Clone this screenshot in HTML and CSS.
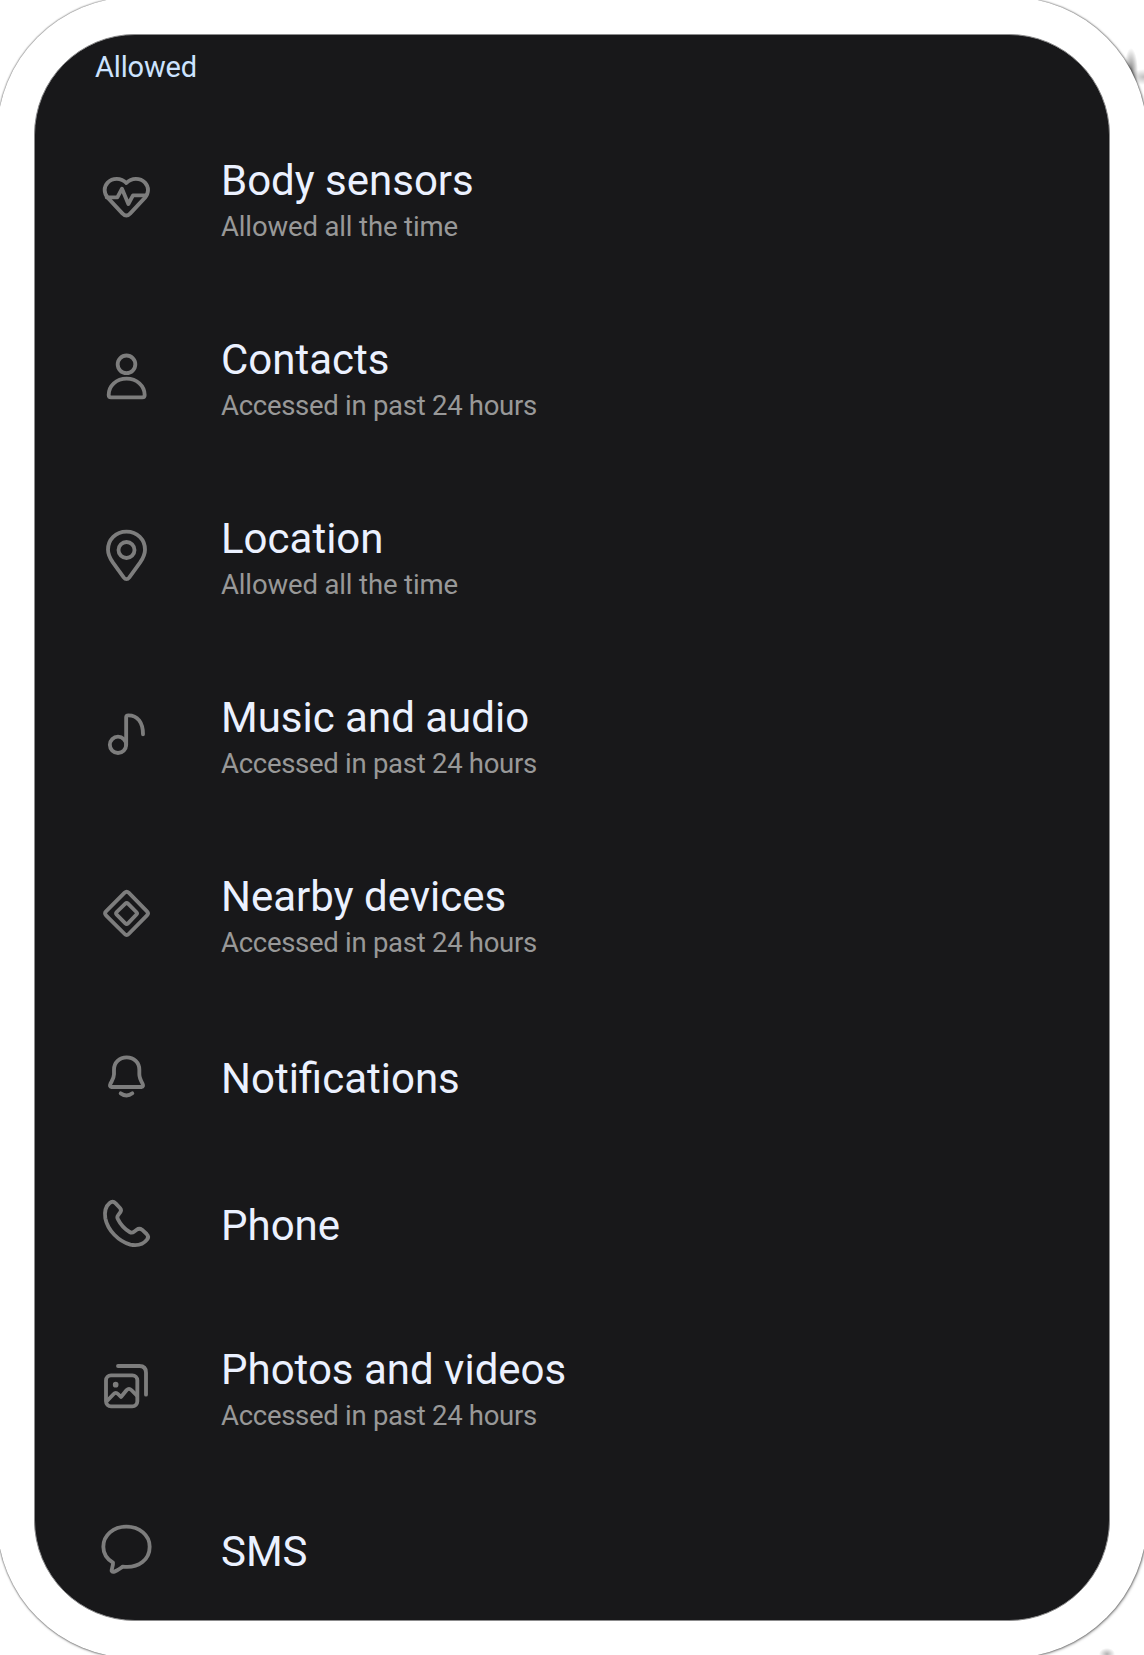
FILE: index.html
```
<!DOCTYPE html>
<html lang="en">
<head>
<meta charset="utf-8">
<title>App permissions</title>
<link rel="stylesheet" href="styles.css">
</head>
<body>
<div class="frame">
<main class="panel">
  <h2 class="section">Allowed</h2>
  <ul class="list">
    <li class="row"><svg class="icon" viewBox="0 9 270 270"><path d="M109 99C93 82 67 83 53 98C41 111 41 129 53 143L97 190Q109 203 121 190L165 143C177 129 177 111 165 98C151 83 125 82 109 99Z"/><path d="M50 142H82L96 116L115 162L129 136H168"/></svg>
      <div class="text"><div class="title">Body sensors</div><div class="sub short">Allowed all the time</div></div></li>
    <li class="row"><svg class="icon" viewBox="0 6 270 270"><circle cx="109.500" cy="103" r="26.500"/><path d="M63 202H157Q164 202 164 195C164 167 140 146 110 146C79 146 56 167 56 195Q56 202 63 202Z"/></svg>
      <div class="text"><div class="title">Contacts</div><div class="sub">Accessed in past 24 hours</div></div></li>
    <li class="row"><svg class="icon" viewBox="0 3 270 270"><path d="M109.500 65C77 65 54 89 54 119C54 136 60 145 69 158L101 202Q109.500 213 118 202L150 158C159 145 165 136 165 119C165 89 142 65 109.500 65Z"/><circle cx="109.500" cy="120" r="24"/></svg>
      <div class="text"><div class="title">Location</div><div class="sub short">Allowed all the time</div></div></li>
    <li class="row"><svg class="icon" viewBox="0 0 270 270"><circle cx="84" cy="164.500" r="24.500"/><path d="M108.500 165V82Q108.500 76 115 76C143 76 159 98 159 133"/></svg>
      <div class="text"><div class="title">Music and audio</div><div class="sub">Accessed in past 24 hours</div></div></li>
    <li class="row"><svg class="icon" viewBox="0 -3 270 270"><path d="M104 68Q110 62 116 68L171 124Q177 130 171 136L116 192Q110 198 104 192L48 136Q42 130 48 124Z"/><path d="M106 101Q110 97 114 101L139 126Q143 130 139 134L114 160Q110 164 106 160L80 134Q76 130 80 126Z"/></svg>
      <div class="text"><div class="title">Nearby devices</div><div class="sub">Accessed in past 24 hours</div></div></li>
    <li class="row single"><svg class="icon" viewBox="0 -9 270 270"><path d="M65 156H154Q162 155 158 147C151 134 148 129 148 118V104C148 83 132 67 110 67C88 67 72 83 72 104V118C72 129 68 134 61 147Q57 155 65 156Z"/><path d="M92 175Q110 188 127 175"/></svg>
      <div class="text"><div class="title">Notifications</div></div></li>
    <li class="row single"><svg class="icon" viewBox="0 -3 270 270"><path d="M59 69Q68 61 77 70L90 84Q96 91 90 98L84 106Q80 111 84 118C92 134 104 147 119 156Q126 160 132 155L140 149Q148 143 156 149L170 162Q178 170 171 179C160 193 142 198 121 194C86 184 53 151 46 115C43 96 47 79 59 69Z"/></svg>
      <div class="text"><div class="title">Phone</div></div></li>
    <li class="row"><svg class="icon" viewBox="0 -9 270 270"><rect x="48" y="91" width="94" height="93" rx="15"/><path d="M84 63H148Q168 63 168 83V149"/><path d="M51 168L71 147Q77 140 84 147L93 156L110 135Q117 128 124 135L141 152"/><circle class="dot" cx="77" cy="119" r="8.500"/></svg>
      <div class="text"><div class="title">Photos and videos</div><div class="sub">Accessed in past 24 hours</div></div></li>
    <li class="row single"><svg class="icon" viewBox="270 150 270 270"><path d="M379 215C340 215 310 241 310 275C310 295 321 312 339 323C340 333 334 342 335 348Q337 352 345 349C355 345 362 339 368 335C418 341 449 312 449 275C449 241 419 215 379 215Z"/></svg>
      <div class="text"><div class="title">SMS</div></div></li>
  </ul>
</main>
</div>
</body>
</html>
```
FILE: styles.css
```
* { box-sizing: border-box; }
html { background: #fff; overflow: hidden; }
body {
  margin: 0;
  width: 1144px;
  height: 1655px;
  overflow: hidden;
  font-family: Roboto, "Liberation Sans", sans-serif;
  background:
    radial-gradient(ellipse 7px 24px at 1131px 72px, rgba(0, 0, 0, .5), transparent),
    radial-gradient(ellipse 14px 8px at 1144px 77px, rgba(0, 0, 0, .25), transparent),
    radial-gradient(ellipse 8px 6px at 1107px 1654px, rgba(0, 0, 0, .3), transparent);
}
.frame {
  margin: -3px;
  width: 1150px;
  height: 1661px;
  padding: 37px;
  border-radius: 138px;
  box-shadow: 0 0 2px rgba(0, 0, 0, .75), 1px 1px 3px rgba(0, 0, 0, .35);
  background: #fff;
}
.panel {
  height: 1587px;
  border: 1px solid #8b8b8c;
  border-radius: 101px;
  background: #18181a;
  overflow: hidden;
}
.section {
  margin: 0;
  height: 73px;
  padding: 14px 0 0 60px;
  font-size: 29px;
  line-height: 36px;
  letter-spacing: -.15px;
  font-weight: 400;
  color: #cce3ff;
}
.list {
  margin: 0;
  padding: 0;
  list-style: none;
}
.row {
  display: flex;
  align-items: center;
  gap: 41px;
  height: 179px;
  padding-left: 55px;
}
.row.single { height: 147px; }
.icon {
  flex: none;
  width: 90px;
  height: 90px;
  fill: none;
  stroke: #7d7d7d;
  stroke-width: 11.5;
  stroke-linecap: round;
  stroke-linejoin: round;
}
.icon .dot { fill: #7d7d7d; stroke: none; }
.text { padding-top: 9px; }
.single .text { padding-top: 5px; }
.title {
  font-size: 42px;
  line-height: 48px;
  color: #ebf1ff;
}
.sub {
  margin-top: 2px;
  font-size: 27.5px;
  line-height: 40px;
  letter-spacing: -.28px;
  color: #989898;
}
.sub.short { letter-spacing: -.14px; }
```
